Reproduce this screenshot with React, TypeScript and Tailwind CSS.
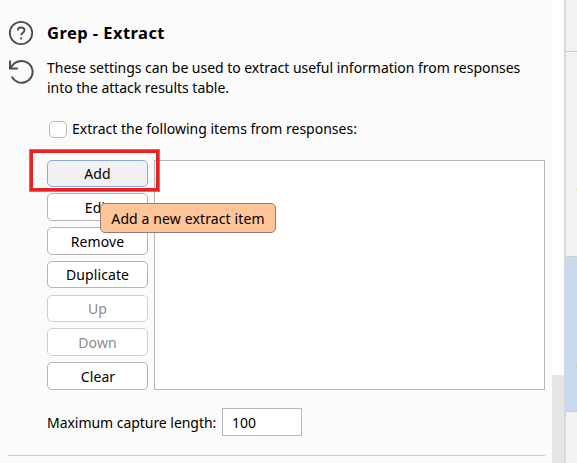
import type { ReactNode } from "react";

function HelpIcon() {
  return (
    <svg width="26" height="26" viewBox="0 0 26 26" fill="none" stroke="#4c4c4c" strokeWidth="1.8">
      <circle cx="13" cy="13" r="11.2" />
      <path d="M9.8 10.5C9.8 8.6 11.1 7.5 13.1 7.5s3.4 1.2 3.4 2.8c0 2.5-3.3 2.4-3.3 4.9" />
      <circle cx="13.1" cy="18.4" r="1.1" fill="#4c4c4c" stroke="none" />
    </svg>
  );
}

function ResetIcon() {
  return (
    <svg width="26" height="27" viewBox="0 0 26 27" fill="none" stroke="#4c4c4c" strokeWidth="2">
      <path d="M2 2.6V10.5H9.8" />
      <path d="M2.5 10.2C4.7 5.6 8.8 2.9 13.6 2.9a10.95 10.95 0 1 1-9.8 15.7" />
    </svg>
  );
}

const rows = [
  { label: "Add", box: "h-[27px] mb-[6px] border-[#88abd9] bg-[#f1f1f1] text-black" },
  { label: "Edit", box: "h-[28px] mb-[6px] pt-px border-[#b8b4b5] bg-white text-black" },
  { label: "Remove", box: "h-[28px] mb-[6px] pt-[2px] border-[#b8b4b5] bg-white text-black" },
  { label: "Duplicate", box: "h-[27px] mb-[7px] border-[#b8b4b5] bg-white text-black" },
  { label: "Up", box: "h-[27px] mb-[6px] border-[#d0cecf] bg-white text-[#8c8c8c]" },
  { label: "Down", box: "h-[28px] mb-[6px] pt-[2px] border-[#d0cecf] bg-white text-[#8c8c8c]" },
  { label: "Clear", box: "h-[28px] pt-[2px] pl-px border-[#b8b4b5] bg-white text-black" },
];

function Line({ children }: { children: ReactNode }) {
  return <p className="whitespace-nowrap tracking-[-0.03px]">{children}</p>;
}

export default function App() {
  return (
    <div className="relative flex h-[463px] w-[577px] overflow-hidden bg-white font-['Noto_Sans',sans-serif] text-[14px] leading-5 text-black">
      <main className="h-full w-[552px] bg-[#fbfbfb] pl-2 pr-[7px]">
        <header className="flex h-[52px] items-end gap-[13px] pb-[6px]">
          <HelpIcon />
          <h1 className="mb-[3px] whitespace-nowrap text-[16.5px] font-bold leading-5 tracking-[0.45px]">Grep - Extract</h1>
        </header>
        <section className="flex h-[67px] gap-[13px] pt-[6px]">
          <ResetIcon />
          <div className="leading-5">
            <Line>These settings can be used to extract useful information from responses</Line>
            <Line>into the attack results table.</Line>
          </div>
        </section>
        <label className="ml-[41px] flex h-5 items-center gap-[5px]">
          <span className="h-[17px] w-[18px] rounded-[5px] border border-[#b8b8b8] bg-white" />
          <span className="whitespace-nowrap">Extract the following items from responses:</span>
        </label>
        <div className="ml-[39px] mt-[21px] flex h-[230px] gap-[6px]">
          <div className="flex w-[101px] flex-col">
            {rows.map((r) => (
              <button key={r.label} className={"flex shrink-0 items-center justify-center rounded-[5px] border tracking-[0.1px] " + r.box}>
                {r.label}
              </button>
            ))}
          </div>
          <div className="h-[230px] w-[391px] border border-[#b8b4b5] bg-white" />
        </div>
        <div className="ml-[39px] mt-[18px] flex h-7 items-center">
          <span className="w-[175px] whitespace-nowrap pt-[2px] tracking-[-0.04px]">Maximum capture length:</span>
          <div className="flex h-7 w-[80px] items-center border border-[#b9b7b8] bg-white pl-[9px] pt-px">100</div>
        </div>
        <hr className="mt-[19px] w-[537px] border-[#cdcdcd]" />
      </main>
      <div className="flex w-3 flex-col justify-end bg-white">
        <div className="h-[88px] bg-[#e5e5e5]" />
      </div>
      <aside className="flex flex-1 flex-col border-l-2 border-[#d5d9d9] bg-[#f3f1f2]">
        <div className="h-[52px] border-b border-[#cccccc]" />
        <div className="h-[204px]" />
        <div className="h-[156px] border-y border-[#cccccc] bg-[#c8d9f0]" />
      </aside>
      <div className="absolute left-[29px] top-[149px] h-[43px] w-[131px] border border-[#e92024]/70">
        <div className="h-full w-full border-3 border-[#e92024]" />
      </div>
      <div className="absolute left-[100px] top-[203px] flex h-[30px] w-[176px] items-center justify-center rounded-[5px] border border-[#8f7d76] bg-[#ffc599] pt-px">
        <span className="whitespace-nowrap tracking-[0.12px]">Add a new extract item</span>
      </div>
      <div className="absolute left-[576px] top-[188px] h-[3px] w-px bg-[#edf0a0]" />
      <div className="absolute left-[576px] top-[364px] h-[4px] w-px bg-[#c3d9a0]" />
    </div>
  );
}
